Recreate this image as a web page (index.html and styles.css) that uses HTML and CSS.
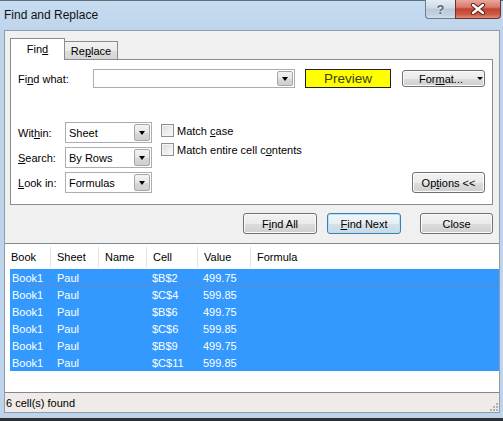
FILE: index.html
```html
<!DOCTYPE html>
<html>
<head>
<meta charset="utf-8">
<link rel="stylesheet" href="styles.css">
</head>
<body>
<div class="window">
  <div class="titlebar">
    <span class="title">Find and Replace</span>
    <div class="caption">
      <div class="cap help">?</div>
      <div class="cap close">
        <svg width="16" height="12" viewBox="0 0 16 12">
          <path d="M3 2 L13 10 M13 2 L3 10" stroke="#5a1a12" stroke-width="4.2" stroke-linecap="round"/>
          <path d="M3 2 L13 10 M13 2 L3 10" stroke="#ffffff" stroke-width="2.4" stroke-linecap="round"/>
        </svg>
      </div>
    </div>
  </div>
  <div class="client">
    <div class="top">
      <div class="tabs">
        <div class="tab active"><span>Fin<u>d</u></span></div>
        <div class="tab"><span>Re<u>p</u>lace</span></div>
      </div>
      <div class="panel">
        <div class="find-row">
          <span class="find-label">Fi<u>n</u>d what:</span>
          <div class="combo wide"><div class="field"></div><div class="drop"><i class="tri"></i></div></div>
          <div class="preview">Preview</div>
          <div class="btn format"><span>For<u>m</u>at...</span><i class="tri small"></i></div>
        </div>
        <div class="options">
          <div class="selects">
            <div class="srow"><span class="slabel">Wit<u>h</u>in:</span><div class="combo sel"><div class="field">Sheet</div><div class="drop"><i class="tri"></i></div></div></div>
            <div class="srow"><span class="slabel"><u>S</u>earch:</span><div class="combo sel"><div class="field">By Rows</div><div class="drop"><i class="tri"></i></div></div></div>
            <div class="srow"><span class="slabel"><u>L</u>ook in:</span><div class="combo sel"><div class="field">Formulas</div><div class="drop"><i class="tri"></i></div></div></div>
          </div>
          <div class="checks">
            <div class="check"><span class="box"></span><span>Match <u>c</u>ase</span></div>
            <div class="check"><span class="box"></span><span>Match entire cell c<u>o</u>ntents</span></div>
          </div>
          <div class="btn opts"><span>Op<u>t</u>ions &lt;&lt;</span></div>
        </div>
      </div>
      <div class="actions">
        <div class="btn act"><span>F<u>i</u>nd All</span></div>
        <div class="btn act default"><span><u>F</u>ind Next</span></div>
        <div class="btn act closeb"><span>Close</span></div>
      </div>
    </div>
    <div class="results">
      <div class="thead">
        <span class="hc first">Book</span>
        <span class="hc">Sheet</span>
        <span class="hc">Name</span>
        <span class="hc">Cell</span>
        <span class="hc">Value</span>
        <span class="hc">Formula</span>
      </div>
      <div class="rows">
        <div class="row focus"><span>Book1</span><span>Paul</span><span></span><span>$B$2</span><span>499.75</span><span></span></div>
        <div class="row"><span>Book1</span><span>Paul</span><span></span><span>$C$4</span><span>599.85</span><span></span></div>
        <div class="row"><span>Book1</span><span>Paul</span><span></span><span>$B$6</span><span>499.75</span><span></span></div>
        <div class="row"><span>Book1</span><span>Paul</span><span></span><span>$C$6</span><span>599.85</span><span></span></div>
        <div class="row"><span>Book1</span><span>Paul</span><span></span><span>$B$9</span><span>499.75</span><span></span></div>
        <div class="row"><span>Book1</span><span>Paul</span><span></span><span>$C$11</span><span>599.85</span><span></span></div>
      </div>
    </div>
    <div class="status">
      <span>6 cell(s) found</span>
      <svg class="grip" width="10" height="10" viewBox="0 0 10 10">
        <g fill="#b5b2ae">
          <rect x="8" y="2" width="2" height="2"/>
          <rect x="5" y="5" width="2" height="2"/><rect x="8" y="5" width="2" height="2"/>
          <rect x="2" y="8" width="2" height="2"/><rect x="5" y="8" width="2" height="2"/><rect x="8" y="8" width="2" height="2"/>
        </g>
      </svg>
    </div>
  </div>
</div>
</body>
</html>
```
FILE: styles.css
```css
* { box-sizing: border-box; }
body {
  margin: 0;
  font-family: "Liberation Sans", Arial, sans-serif;
  font-size: 11px;
  color: #000;
}
u { text-decoration: underline; text-underline-offset: 1px; }

.window {
  width: 503px;
  height: 421px;
  display: flex;
  flex-direction: column;
  background: #bed4eb;
  border-bottom: 3px solid #2c3035;
  padding-bottom: 5px;
  overflow: hidden;
}
.titlebar {
  height: 30px;
  flex: none;
  display: flex;
  align-items: flex-start;
  background: linear-gradient(#c6dcf1, #c2d8ee 60%, #bed4eb);
  border-top: 1px solid #5f6e7e;
}
.title {
  font-size: 12px;
  line-height: 29px;
  padding-left: 4px;
  color: #111;
}
.caption {
  margin-left: auto;
  margin-right: 2px;
  margin-top: -1px;
  display: flex;
}
.cap {
  height: 19px;
  display: flex;
  align-items: center;
  justify-content: center;
  border: 1px solid #6d7b8b;
  border-top: none;
}
.help {
  width: 30px;
  border-right: none;
  border-radius: 0 0 0 4px;
  background: linear-gradient(#e4ecf5, #cdd9e6 45%, #b9c9da 50%, #c4d2e1 85%, #d6e1ec);
  color: #5c6673;
  font-weight: bold;
  font-size: 13px;
  text-shadow: 0 0 2px #fff;
}
.close {
  width: 46px;
  border-color: #6e3028;
  border-radius: 0 0 4px 0;
  background: linear-gradient(#e8a79c, #d77a6a 40%, #c2432f 50%, #cd5a45 80%, #e08a7a);
}

.client {
  flex: 1;
  margin: 0 3px 0 4px;
  border: 1px solid #8f9dae;
  background: #f0f0f0;
  display: flex;
  flex-direction: column;
  min-height: 0;
}
.top {
  flex: none;
  padding: 7px 6px 0 5px;
}
.tabs {
  height: 21px;
  display: flex;
  align-items: flex-end;
}
.tab {
  border: 1px solid #898c95;
  border-bottom: none;
  display: flex;
  justify-content: center;
}
.tab.active {
  width: 55px;
  height: 22px;
  margin-bottom: -1px;
  position: relative;
  z-index: 1;
  background: #fff;
  padding-top: 4px;
}
.tab:not(.active) {
  width: 53px;
  height: 18px;
  border-left: none;
  background: linear-gradient(#f2f2f2, #ebebeb 50%, #dddddd 51%, #d6d6d6);
  padding-top: 3px;
}
.panel {
  height: 146px;
  border: 1px solid #898c95;
  background: #fff;
  padding: 9px 7px 0 7px;
}
.find-row {
  display: flex;
  align-items: center;
  height: 19px;
}
.find-label { width: 75px; }
.combo {
  display: flex;
  border: 1px solid #abadb3;
  background: #fff;
}
.combo .field {
  flex: 1;
  padding-left: 3px;
  display: flex;
  align-items: center;
}
.combo .drop {
  width: 16px;
  margin: 1px;
  border: 1px solid #a7a7a7;
  border-radius: 2px;
  background: linear-gradient(#f3f3f3, #e6e6e6 50%, #d8d8d8 51%, #cfcfcf);
  display: flex;
  align-items: center;
  justify-content: center;
}
.combo.wide { width: 202px; height: 19px; }
.combo.sel { width: 87px; height: 21px; }
.tri {
  width: 0;
  height: 0;
  border-top: 4px solid #000;
  border-left: 3.5px solid transparent;
  border-right: 3.5px solid transparent;
}
.tri.small {
  border-top-width: 3px;
  border-left-width: 3px;
  border-right-width: 3px;
}
.preview {
  margin-left: 10px;
  width: 86px;
  height: 19px;
  background: #ffff00;
  border: 1px solid #202020;
  display: flex;
  align-items: center;
  justify-content: center;
  font-size: 13.5px;
  color: #3d3d14;
}
.btn {
  border: 1px solid #707070;
  border-radius: 3px;
  background: linear-gradient(#f2f2f2, #ebebeb 50%, #dddddd 51%, #cfcfcf);
  box-shadow: inset 0 0 0 1px #fcfcfc;
  display: flex;
  align-items: center;
  justify-content: center;
}
.format {
  margin-left: 11px;
  width: 83px;
  height: 17px;
  justify-content: flex-start;
  padding-left: 16px;
}
.format .tri { margin-left: 14px; }

.options {
  display: flex;
  margin-top: 34px;
}
.selects {
  display: flex;
  flex-direction: column;
  gap: 4px;
}
.srow {
  display: flex;
  align-items: center;
}
.slabel { width: 47px; }
.checks {
  margin-left: 9px;
  padding-top: 2px;
  display: flex;
  flex-direction: column;
  gap: 6px;
}
.check {
  display: flex;
  align-items: center;
  height: 13px;
}
.box {
  width: 13px;
  height: 13px;
  border: 1px solid #8e8f8f;
  background: linear-gradient(135deg, #dcdcdc, #fbfbfb);
  box-shadow: inset 0 0 0 1px #f4f4f4;
  margin-right: 3px;
}
.opts {
  margin-left: auto;
  align-self: flex-end;
  width: 73px;
  height: 21px;
}

.actions {
  display: flex;
  justify-content: flex-end;
  margin-top: 8px;
  margin-bottom: 9px;
}
.act { width: 74px; height: 21px; }
.act.default {
  margin-left: 10px;
  border-color: #3c7fb1;
  box-shadow: inset 0 0 0 1px #b5e0f6;
  background: linear-gradient(#f1f6f9, #e6eef4 50%, #d6e2ea 51%, #cbd9e3);
}
.act.closeb { margin-left: 19px; width: 73px; }

.results {
  flex: 1;
  background: #fff;
  border-top: 1px solid #828790;
  border-bottom: 1px solid #828790;
  display: flex;
  flex-direction: column;
  min-height: 0;
}
.thead {
  height: 25px;
  flex: none;
  display: grid;
  grid-template-columns: 45px 48px 48px 51px 53px 1fr;
  align-items: center;
  padding: 3px 0 2px 0;
}
.hc {
  height: 100%;
  display: flex;
  align-items: center;
  border-left: 1px solid #e2e2e2;
  padding-left: 6px;
}
.hc.first { border-left: none; padding-left: 6px; }
.rows {
  margin-left: 5px;
  background: #3399ff;
  color: #fff;
}
.row {
  height: 17px;
  display: grid;
  grid-template-columns: 40px 48px 48px 51px 53px 1fr;
  align-items: center;
}
.row span { padding-left: 6px; }
.row span:first-child { padding-left: 2px; }
.row span:nth-child(2) { padding-left: 7px; }
.row.focus { box-shadow: inset 0 -1px 0 #5e8dc0; }

.status {
  height: 19px;
  flex: none;
  background: #efebe8;
  display: flex;
  align-items: center;
  padding-left: 1px;
  position: relative;
}
.grip {
  position: absolute;
  right: 1px;
  bottom: 1px;
}
```
